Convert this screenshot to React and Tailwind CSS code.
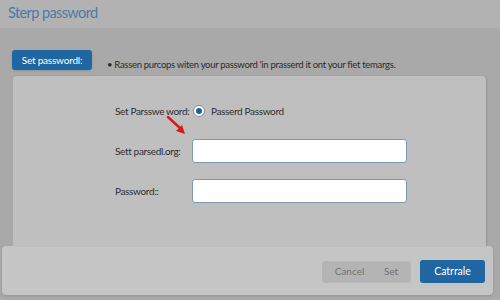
export default function App() {
  return (
    <div className="w-[500px] h-[300px] bg-[#a9a9a9] flex flex-col overflow-hidden whitespace-nowrap" style={{ fontFamily: 'Lato, "Noto Sans", sans-serif' }}>
      <div className="h-[28px] bg-[#b2b2b2] flex items-center pl-[8px] pb-[2px]">
        <h1 className="text-[14.5px] text-[#4c7aa6] leading-none tracking-[-0.6px]">Sterp password</h1>
      </div>

      <div className="flex items-end pt-[22px] pl-[12px]">
        <button className="w-[80px] h-[20px] rounded-[3px] bg-[#1f66a3] text-white text-[10px] tracking-[-0.2px] leading-none shadow-sm">Set passwordl:</button>
        <p className="ml-[15px] mb-[1px] text-[9.5px] tracking-[-0.3px] text-[#2b2b2b] leading-none">• Rassen purcops witen your password 'in prasserd it ont your fiet temargs.</p>
      </div>

      <div className="relative mt-[6px] ml-[13px] w-[473px] h-[170px] rounded-t-[4px] bg-[#bfbfbf] shadow-[1px_0_2px_rgba(0,0,0,0.12)] pl-[102px] pt-[23px] flex flex-col gap-4 text-[10px] tracking-[-0.35px] text-[#2e2e2e]">
        <div className="flex items-center h-[24px]">
          <span className="w-[78px]">Set Parsswe word:</span>
          <span className="w-[12px] h-[12px] rounded-full bg-white border border-[#7d8c99] flex items-center justify-center">
            <span className="w-[6px] h-[6px] rounded-full bg-[#1f5f96]" />
          </span>
          <span className="ml-[6px]">Passerd Password</span>
        </div>
        <div className="flex items-center h-[24px]">
          <span className="w-[77px]">Sett parsedl.org:</span>
          <input className="w-[215px] h-[24px] bg-white border border-[#7d9ab4] rounded-[3px]" />
        </div>
        <div className="flex items-center h-[24px]">
          <span className="w-[77px]">Password::</span>
          <input className="w-[215px] h-[24px] bg-white border border-[#7d9ab4] rounded-[3px]" />
        </div>
        <svg className="absolute left-[153px] top-[39px]" width="22" height="22" viewBox="0 0 22 22">
          <line x1="2" y1="2" x2="15" y2="14" stroke="#d8191c" strokeWidth="2.4" strokeLinecap="round" />
          <polygon points="19,19 10,16 16,10" fill="#d8191c" />
        </svg>
      </div>

      <div className="ml-[2px] w-[491px] h-[49px] bg-[#c5c5c5] rounded-[4px] flex items-center justify-end pr-[8px] pt-[2px] gap-[9px] shadow-sm">
        <div className="flex w-[89px] h-[22px] rounded-[3px] bg-[#b4b4b4] text-[10px] text-[#727272]">
          <span className="flex-1 flex items-center justify-center pl-[2px]">Cancel</span>
          <span className="w-[36px] flex items-center justify-center pr-[4px]">Set</span>
        </div>
        <button className="w-[65px] h-[23px] rounded-[3px] bg-[#1f66a3] text-white text-[10.5px]">Catrrale</button>
      </div>
    </div>
  );
}
